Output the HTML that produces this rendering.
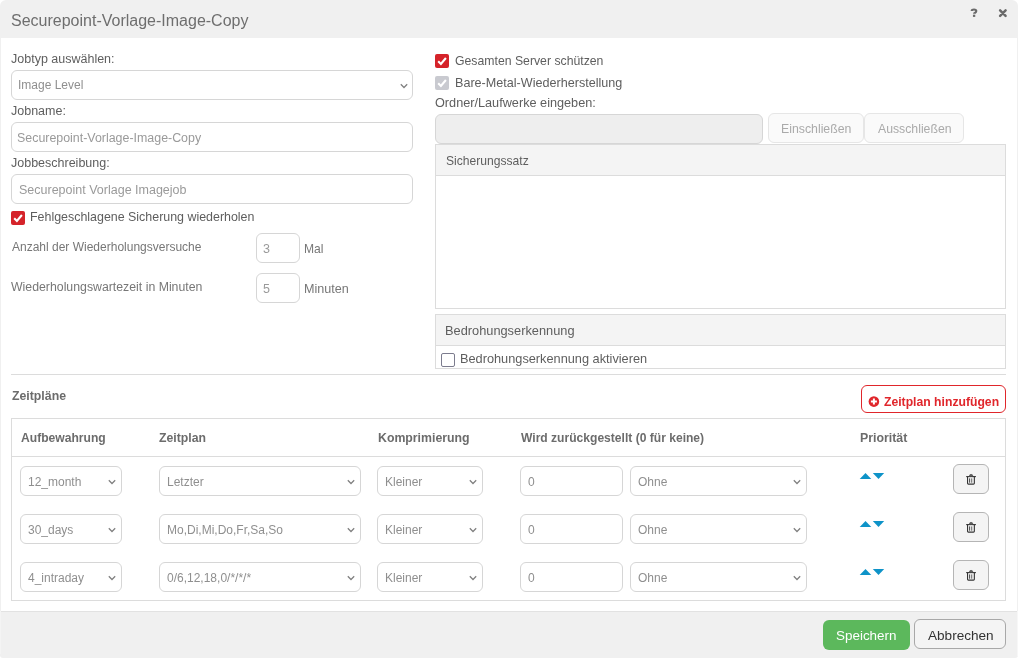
<!DOCTYPE html>
<html><head><meta charset="utf-8"><style>
html,body{margin:0;padding:0;background:#fff;}
body{width:1018px;height:658px;position:relative;overflow:hidden;font-family:"Liberation Sans", sans-serif;}
.t{position:absolute;white-space:nowrap;line-height:1;will-change:transform;}
.b{position:absolute;}
</style></head><body>
<div class="b" style="left:0px;top:0px;width:1018px;height:658px;background:#f0f0f0;border-radius:6px 6px 3px 3px;"></div>
<div class="b" style="left:1017px;top:611px;width:1px;height:45px;background:#f7f7f7;"></div>
<div class="b" style="left:0px;top:611px;width:1px;height:43px;background:#f4f4f4;"></div>
<div class="b" style="left:1px;top:38px;width:1016px;height:573px;background:#fff;"></div>
<div class="b" style="left:1px;top:611px;width:1016px;height:1px;background:#e2e2e2;"></div>
<div class="t" style="left:11px;top:13px;font-size:16px;color:#6e6e6e;font-weight:normal;">Securepoint-Vorlage-Image-Copy</div>
<svg class="b" style="left:968px;top:6px" width="12" height="13" viewBox="0 0 12 13"><path d="M3.7 5.1 Q3.7 3.5 6 3.5 Q8.3 3.5 8.3 5.1 Q8.3 6.1 7.1 6.7 Q6.1 7.1 6.1 7.7" fill="none" stroke="#6a6a6a" stroke-width="2.1"/><rect x="4.95" y="8.7" width="2.3" height="2.2" fill="#6a6a6a"/></svg>
<svg class="b" style="left:997px;top:7px" width="12" height="12" viewBox="0 0 12 12"><path d="M3.1 3.3 L8.6 8.8 M8.6 3.3 L3.1 8.8" stroke="#6a6a6a" stroke-width="2.5" stroke-linecap="round"/></svg>
<div class="t" style="left:11px;top:53px;font-size:12.5px;color:#5e5e5e;font-weight:normal;">Jobtyp auswählen:</div>
<div class="b" style="left:11px;top:70px;width:402px;height:30px;box-sizing:border-box;border:1px solid #d6d6d6;border-radius:6px;background:#fff;"></div>
<div class="t" style="left:18px;top:79px;font-size:12px;color:#8f8f8f;font-weight:normal;">Image Level</div>
<svg class="b" style="left:399px;top:82px" width="10" height="8" viewBox="0 0 10 8"><path d="M1.8 2.2 L5 5.5 L8.2 2.2" fill="none" stroke="#808080" stroke-width="1.25"/></svg>
<div class="t" style="left:11px;top:105px;font-size:12.5px;color:#5e5e5e;font-weight:normal;">Jobname:</div>
<div class="b" style="left:11px;top:122px;width:402px;height:30px;box-sizing:border-box;border:1px solid #d6d6d6;border-radius:6px;background:#fff;"></div>
<div class="t" style="left:17.3px;top:132px;font-size:12.42px;color:#9a9a9a;font-weight:normal;">Securepoint-Vorlage-Image-Copy</div>
<div class="t" style="left:11px;top:157px;font-size:12.5px;color:#5e5e5e;font-weight:normal;">Jobbeschreibung:</div>
<div class="b" style="left:11px;top:174px;width:402px;height:30px;box-sizing:border-box;border:1px solid #d6d6d6;border-radius:6px;background:#fff;"></div>
<div class="t" style="left:18.5px;top:184px;font-size:12.5px;color:#9a9a9a;font-weight:normal;">Securepoint Vorlage Imagejob</div>
<svg class="b" style="left:11px;top:211px" width="14" height="14" viewBox="0 0 14 14"><rect x="0" y="0" width="14" height="14" rx="2" fill="#d5232a"/><path d="M3.2 7.3 L5.9 9.9 L10.9 4.0" fill="none" stroke="#fff" stroke-width="2.1"/></svg>
<div class="t" style="left:30.2px;top:211px;font-size:12.43px;color:#5e5e5e;font-weight:normal;">Fehlgeschlagene Sicherung wiederholen</div>
<div class="t" style="left:11.5px;top:241px;font-size:12px;color:#777;font-weight:normal;">Anzahl der Wiederholungsversuche</div>
<div class="b" style="left:256px;top:233px;width:44px;height:30px;box-sizing:border-box;border:1px solid #d6d6d6;border-radius:6px;background:#fff;"></div>
<div class="t" style="left:263px;top:243px;font-size:12.5px;color:#9a9a9a;font-weight:normal;">3</div>
<div class="t" style="left:304.3px;top:243px;font-size:12.1px;color:#777;font-weight:normal;">Mal</div>
<div class="t" style="left:11.3px;top:281px;font-size:12.3px;color:#777;font-weight:normal;">Wiederholungswartezeit in Minuten</div>
<div class="b" style="left:256px;top:273px;width:44px;height:30px;box-sizing:border-box;border:1px solid #d6d6d6;border-radius:6px;background:#fff;"></div>
<div class="t" style="left:263px;top:283px;font-size:12.5px;color:#9a9a9a;font-weight:normal;">5</div>
<div class="t" style="left:304.2px;top:283px;font-size:12.6px;color:#777;font-weight:normal;">Minuten</div>
<svg class="b" style="left:435px;top:54px" width="14" height="14" viewBox="0 0 14 14"><rect x="0" y="0" width="14" height="14" rx="2" fill="#d5232a"/><path d="M3.2 7.3 L5.9 9.9 L10.9 4.0" fill="none" stroke="#fff" stroke-width="2.1"/></svg>
<div class="t" style="left:455px;top:55px;font-size:12.25px;color:#5e5e5e;font-weight:normal;">Gesamten Server schützen</div>
<svg class="b" style="left:435px;top:76px" width="14" height="14" viewBox="0 0 14 14"><rect x="0" y="0" width="14" height="14" rx="2" fill="#c9cad0"/><path d="M3.2 7.3 L5.9 9.9 L10.9 4.0" fill="none" stroke="#fff" stroke-width="2.1"/></svg>
<div class="t" style="left:455px;top:77px;font-size:12.6px;color:#5e5e5e;font-weight:normal;">Bare-Metal-Wiederherstellung</div>
<div class="t" style="left:435.1px;top:97px;font-size:12.7px;color:#5e5e5e;font-weight:normal;">Ordner/Laufwerke eingeben:</div>
<div class="b" style="left:435px;top:114px;width:328px;height:30px;box-sizing:border-box;border:1px solid #d6d6d6;border-radius:6px;background:#eeeeee;"></div>
<div class="b" style="left:768px;top:113px;width:96px;height:30px;box-sizing:border-box;border:1px solid #e6e6e6;border-radius:6px;background:#fafafa;"></div>
<div class="t" style="left:780.8px;top:123px;font-size:12.3px;color:#aaa;font-weight:normal;">Einschließen</div>
<div class="b" style="left:864px;top:113px;width:100px;height:30px;box-sizing:border-box;border:1px solid #e6e6e6;border-radius:6px;background:#fafafa;"></div>
<div class="t" style="left:877.8px;top:123px;font-size:12.25px;color:#aaa;font-weight:normal;">Ausschließen</div>
<div class="b" style="left:435px;top:144px;width:571px;height:165px;box-sizing:border-box;border:1px solid #dcdcdc;background:#fff;"></div>
<div class="b" style="left:436px;top:145px;width:569px;height:30px;background:#f4f4f4;border-bottom:1px solid #dcdcdc;"></div>
<div class="t" style="left:446px;top:155px;font-size:12.1px;color:#5e5e5e;font-weight:normal;">Sicherungssatz</div>
<div class="b" style="left:435px;top:314px;width:571px;height:55px;box-sizing:border-box;border:1px solid #dcdcdc;background:#fff;"></div>
<div class="b" style="left:436px;top:315px;width:569px;height:30px;background:#f4f4f4;border-bottom:1px solid #dcdcdc;"></div>
<div class="t" style="left:445.3px;top:325px;font-size:12.8px;color:#5e5e5e;font-weight:normal;">Bedrohungserkennung</div>
<div class="b" style="left:441px;top:353px;width:14px;height:14px;box-sizing:border-box;border:1px solid #7c7c8e;border-radius:2px;background:#fff;"></div>
<div class="t" style="left:460px;top:353px;font-size:12.75px;color:#5e5e5e;font-weight:normal;">Bedrohungserkennung aktivieren</div>
<div class="b" style="left:11px;top:374px;width:995px;height:1px;background:#dcdcdc;"></div>
<div class="t" style="left:11.5px;top:390px;font-size:12.3px;color:#6c6c6c;font-weight:bold;">Zeitpläne</div>
<div class="b" style="left:861px;top:385px;width:145px;height:28px;box-sizing:border-box;border:1px solid #e0262b;border-radius:6px;background:#fff;"></div>
<svg class="b" style="left:868px;top:396px" width="12" height="12" viewBox="0 0 12 12"><circle cx="5.9" cy="5.6" r="5.3" fill="#e0262b"/><path d="M5.9 2.6 V8.6 M2.9 5.6 H8.9" stroke="#fff" stroke-width="2"/></svg>
<div class="t" style="left:884px;top:396px;font-size:12.2px;color:#e0262b;font-weight:bold;">Zeitplan hinzufügen</div>
<div class="b" style="left:11px;top:418px;width:995px;height:183px;box-sizing:border-box;border:1px solid #dcdcdc;background:#fff;"></div>
<div class="b" style="left:12px;top:456px;width:993px;height:1px;background:#dcdcdc;"></div>
<div class="t" style="left:21px;top:432px;font-size:12.12px;color:#6c6c6c;font-weight:bold;">Aufbewahrung</div>
<div class="t" style="left:159px;top:432px;font-size:12.25px;color:#6c6c6c;font-weight:bold;">Zeitplan</div>
<div class="t" style="left:377.9px;top:432px;font-size:12.3px;color:#6c6c6c;font-weight:bold;">Komprimierung</div>
<div class="t" style="left:521px;top:432px;font-size:12.08px;color:#6c6c6c;font-weight:bold;">Wird zurückgestellt (0 für keine)</div>
<div class="t" style="left:859.8px;top:432px;font-size:12.35px;color:#6c6c6c;font-weight:bold;">Priorität</div>
<div class="b" style="left:20px;top:466px;width:102px;height:30px;box-sizing:border-box;border:1px solid #d6d6d6;border-radius:6px;background:#fff;"></div>
<div class="t" style="left:27.5px;top:476px;font-size:12px;color:#8f8f8f;font-weight:normal;">12_month</div>
<svg class="b" style="left:107px;top:478px" width="10" height="8" viewBox="0 0 10 8"><path d="M1.8 2.2 L5 5.5 L8.2 2.2" fill="none" stroke="#808080" stroke-width="1.25"/></svg>
<div class="b" style="left:159px;top:466px;width:202px;height:30px;box-sizing:border-box;border:1px solid #d6d6d6;border-radius:6px;background:#fff;"></div>
<div class="t" style="left:166.5px;top:476px;font-size:12px;color:#8f8f8f;font-weight:normal;">Letzter</div>
<svg class="b" style="left:346px;top:478px" width="10" height="8" viewBox="0 0 10 8"><path d="M1.8 2.2 L5 5.5 L8.2 2.2" fill="none" stroke="#808080" stroke-width="1.25"/></svg>
<div class="b" style="left:377px;top:466px;width:106px;height:30px;box-sizing:border-box;border:1px solid #d6d6d6;border-radius:6px;background:#fff;"></div>
<div class="t" style="left:384.5px;top:476px;font-size:12px;color:#8f8f8f;font-weight:normal;">Kleiner</div>
<svg class="b" style="left:468px;top:478px" width="10" height="8" viewBox="0 0 10 8"><path d="M1.8 2.2 L5 5.5 L8.2 2.2" fill="none" stroke="#808080" stroke-width="1.25"/></svg>
<div class="b" style="left:520px;top:466px;width:103px;height:30px;box-sizing:border-box;border:1px solid #d6d6d6;border-radius:6px;background:#fff;"></div>
<div class="t" style="left:528px;top:476px;font-size:12px;color:#8f8f8f;font-weight:normal;">0</div>
<div class="b" style="left:630px;top:466px;width:177px;height:30px;box-sizing:border-box;border:1px solid #d6d6d6;border-radius:6px;background:#fff;"></div>
<div class="t" style="left:637.5px;top:476px;font-size:12px;color:#8f8f8f;font-weight:normal;">Ohne</div>
<svg class="b" style="left:792px;top:478px" width="10" height="8" viewBox="0 0 10 8"><path d="M1.8 2.2 L5 5.5 L8.2 2.2" fill="none" stroke="#808080" stroke-width="1.25"/></svg>
<svg class="b" style="left:859px;top:473px" width="27" height="7" viewBox="0 0 27 7"><path d="M0.7 6 L6.5 0 L12.3 6 Z" fill="#0e93c8"/><path d="M13.8 0 L25.2 0 L19.5 6 Z" fill="#0e93c8"/></svg>
<div class="b" style="left:953px;top:464px;width:36px;height:30px;box-sizing:border-box;border:1px solid #b5b5b5;border-radius:6px;background:#f4f4f4;"></div>
<svg class="b" style="left:965px;top:473px" width="12" height="13" viewBox="0 0 12 13"><path d="M1.2 3.6 H10.9" stroke="#333" stroke-width="1.1"/><path d="M4.5 3.4 V2.8 Q4.5 1.4 6.1 1.4 Q7.7 1.4 7.7 2.8 V3.4 Z" fill="#666" stroke="#444" stroke-width="0.7"/><path d="M2.55 3.8 V10.3 Q2.55 11.15 3.4 11.15 H8.5 Q9.35 11.15 9.35 10.3 V3.8" fill="none" stroke="#333" stroke-width="1.1"/><rect x="4.2" y="5.4" width="0.9" height="4.3" fill="#333"/><rect x="6.3" y="5.4" width="0.9" height="4.3" fill="#555"/></svg>
<div class="b" style="left:20px;top:514px;width:102px;height:30px;box-sizing:border-box;border:1px solid #d6d6d6;border-radius:6px;background:#fff;"></div>
<div class="t" style="left:27.5px;top:524px;font-size:12px;color:#8f8f8f;font-weight:normal;">30_days</div>
<svg class="b" style="left:107px;top:526px" width="10" height="8" viewBox="0 0 10 8"><path d="M1.8 2.2 L5 5.5 L8.2 2.2" fill="none" stroke="#808080" stroke-width="1.25"/></svg>
<div class="b" style="left:159px;top:514px;width:202px;height:30px;box-sizing:border-box;border:1px solid #d6d6d6;border-radius:6px;background:#fff;"></div>
<div class="t" style="left:166.5px;top:524px;font-size:12px;color:#8f8f8f;font-weight:normal;">Mo,Di,Mi,Do,Fr,Sa,So</div>
<svg class="b" style="left:346px;top:526px" width="10" height="8" viewBox="0 0 10 8"><path d="M1.8 2.2 L5 5.5 L8.2 2.2" fill="none" stroke="#808080" stroke-width="1.25"/></svg>
<div class="b" style="left:377px;top:514px;width:106px;height:30px;box-sizing:border-box;border:1px solid #d6d6d6;border-radius:6px;background:#fff;"></div>
<div class="t" style="left:384.5px;top:524px;font-size:12px;color:#8f8f8f;font-weight:normal;">Kleiner</div>
<svg class="b" style="left:468px;top:526px" width="10" height="8" viewBox="0 0 10 8"><path d="M1.8 2.2 L5 5.5 L8.2 2.2" fill="none" stroke="#808080" stroke-width="1.25"/></svg>
<div class="b" style="left:520px;top:514px;width:103px;height:30px;box-sizing:border-box;border:1px solid #d6d6d6;border-radius:6px;background:#fff;"></div>
<div class="t" style="left:528px;top:524px;font-size:12px;color:#8f8f8f;font-weight:normal;">0</div>
<div class="b" style="left:630px;top:514px;width:177px;height:30px;box-sizing:border-box;border:1px solid #d6d6d6;border-radius:6px;background:#fff;"></div>
<div class="t" style="left:637.5px;top:524px;font-size:12px;color:#8f8f8f;font-weight:normal;">Ohne</div>
<svg class="b" style="left:792px;top:526px" width="10" height="8" viewBox="0 0 10 8"><path d="M1.8 2.2 L5 5.5 L8.2 2.2" fill="none" stroke="#808080" stroke-width="1.25"/></svg>
<svg class="b" style="left:859px;top:521px" width="27" height="7" viewBox="0 0 27 7"><path d="M0.7 6 L6.5 0 L12.3 6 Z" fill="#0e93c8"/><path d="M13.8 0 L25.2 0 L19.5 6 Z" fill="#0e93c8"/></svg>
<div class="b" style="left:953px;top:512px;width:36px;height:30px;box-sizing:border-box;border:1px solid #b5b5b5;border-radius:6px;background:#f4f4f4;"></div>
<svg class="b" style="left:965px;top:521px" width="12" height="13" viewBox="0 0 12 13"><path d="M1.2 3.6 H10.9" stroke="#333" stroke-width="1.1"/><path d="M4.5 3.4 V2.8 Q4.5 1.4 6.1 1.4 Q7.7 1.4 7.7 2.8 V3.4 Z" fill="#666" stroke="#444" stroke-width="0.7"/><path d="M2.55 3.8 V10.3 Q2.55 11.15 3.4 11.15 H8.5 Q9.35 11.15 9.35 10.3 V3.8" fill="none" stroke="#333" stroke-width="1.1"/><rect x="4.2" y="5.4" width="0.9" height="4.3" fill="#333"/><rect x="6.3" y="5.4" width="0.9" height="4.3" fill="#555"/></svg>
<div class="b" style="left:20px;top:562px;width:102px;height:30px;box-sizing:border-box;border:1px solid #d6d6d6;border-radius:6px;background:#fff;"></div>
<div class="t" style="left:27.5px;top:572px;font-size:12px;color:#8f8f8f;font-weight:normal;">4_intraday</div>
<svg class="b" style="left:107px;top:574px" width="10" height="8" viewBox="0 0 10 8"><path d="M1.8 2.2 L5 5.5 L8.2 2.2" fill="none" stroke="#808080" stroke-width="1.25"/></svg>
<div class="b" style="left:159px;top:562px;width:202px;height:30px;box-sizing:border-box;border:1px solid #d6d6d6;border-radius:6px;background:#fff;"></div>
<div class="t" style="left:166.5px;top:572px;font-size:12px;color:#8f8f8f;font-weight:normal;">0/6,12,18,0/*/*/*</div>
<svg class="b" style="left:346px;top:574px" width="10" height="8" viewBox="0 0 10 8"><path d="M1.8 2.2 L5 5.5 L8.2 2.2" fill="none" stroke="#808080" stroke-width="1.25"/></svg>
<div class="b" style="left:377px;top:562px;width:106px;height:30px;box-sizing:border-box;border:1px solid #d6d6d6;border-radius:6px;background:#fff;"></div>
<div class="t" style="left:384.5px;top:572px;font-size:12px;color:#8f8f8f;font-weight:normal;">Kleiner</div>
<svg class="b" style="left:468px;top:574px" width="10" height="8" viewBox="0 0 10 8"><path d="M1.8 2.2 L5 5.5 L8.2 2.2" fill="none" stroke="#808080" stroke-width="1.25"/></svg>
<div class="b" style="left:520px;top:562px;width:103px;height:30px;box-sizing:border-box;border:1px solid #d6d6d6;border-radius:6px;background:#fff;"></div>
<div class="t" style="left:528px;top:572px;font-size:12px;color:#8f8f8f;font-weight:normal;">0</div>
<div class="b" style="left:630px;top:562px;width:177px;height:30px;box-sizing:border-box;border:1px solid #d6d6d6;border-radius:6px;background:#fff;"></div>
<div class="t" style="left:637.5px;top:572px;font-size:12px;color:#8f8f8f;font-weight:normal;">Ohne</div>
<svg class="b" style="left:792px;top:574px" width="10" height="8" viewBox="0 0 10 8"><path d="M1.8 2.2 L5 5.5 L8.2 2.2" fill="none" stroke="#808080" stroke-width="1.25"/></svg>
<svg class="b" style="left:859px;top:569px" width="27" height="7" viewBox="0 0 27 7"><path d="M0.7 6 L6.5 0 L12.3 6 Z" fill="#0e93c8"/><path d="M13.8 0 L25.2 0 L19.5 6 Z" fill="#0e93c8"/></svg>
<div class="b" style="left:953px;top:560px;width:36px;height:30px;box-sizing:border-box;border:1px solid #b5b5b5;border-radius:6px;background:#f4f4f4;"></div>
<svg class="b" style="left:965px;top:569px" width="12" height="13" viewBox="0 0 12 13"><path d="M1.2 3.6 H10.9" stroke="#333" stroke-width="1.1"/><path d="M4.5 3.4 V2.8 Q4.5 1.4 6.1 1.4 Q7.7 1.4 7.7 2.8 V3.4 Z" fill="#666" stroke="#444" stroke-width="0.7"/><path d="M2.55 3.8 V10.3 Q2.55 11.15 3.4 11.15 H8.5 Q9.35 11.15 9.35 10.3 V3.8" fill="none" stroke="#333" stroke-width="1.1"/><rect x="4.2" y="5.4" width="0.9" height="4.3" fill="#333"/><rect x="6.3" y="5.4" width="0.9" height="4.3" fill="#555"/></svg>
<div class="b" style="left:823px;top:620px;width:87px;height:30px;border-radius:6px;background:#5cb85c;"></div>
<div class="t" style="left:836px;top:629px;font-size:13.45px;color:#fff;font-weight:normal;">Speichern</div>
<div class="b" style="left:914px;top:619px;width:92px;height:30px;box-sizing:border-box;border:1px solid #a8a8a8;border-radius:6px;background:#f4f4f4;"></div>
<div class="t" style="left:928.1px;top:629px;font-size:13.58px;color:#333;font-weight:normal;">Abbrechen</div>
</body></html>
